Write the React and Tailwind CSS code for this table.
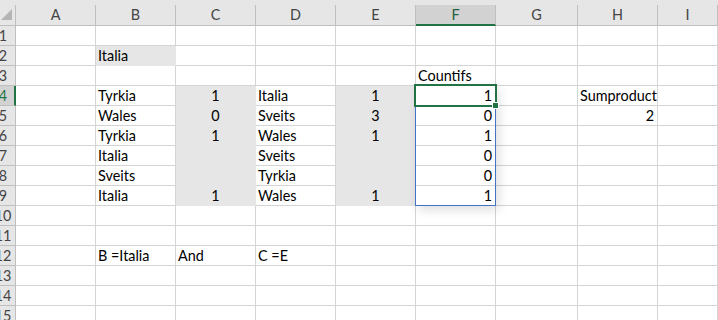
import React from 'react';

const cols = ['A', 'B', 'C', 'D', 'E', 'F', 'G', 'H', 'I'];

// value, align ('l' | 'c' | 'r'), filled
const data = {
  2: { B: ['Italia', 'l', true] },
  3: { F: ['Countifs', 'l'] },
  4: { B: ['Tyrkia', 'l'], C: ['1', 'c', true], D: ['Italia', 'l'], E: ['1', 'c', true], F: ['1', 'r'], H: ['Sumproduct', 'l'] },
  5: { B: ['Wales', 'l'], C: ['0', 'c', true], D: ['Sveits', 'l'], E: ['3', 'c', true], F: ['0', 'r'], H: ['2', 'r'] },
  6: { B: ['Tyrkia', 'l'], C: ['1', 'c', true], D: ['Wales', 'l'], E: ['1', 'c', true], F: ['1', 'r'] },
  7: { B: ['Italia', 'l'], C: ['', 'c', true], D: ['Sveits', 'l'], E: ['', 'c', true], F: ['0', 'r'] },
  8: { B: ['Sveits', 'l'], C: ['', 'c', true], D: ['Tyrkia', 'l'], E: ['', 'c', true], F: ['0', 'r'] },
  9: { B: ['Italia', 'l'], C: ['1', 'c', true], D: ['Wales', 'l'], E: ['1', 'c', true], F: ['1', 'r'] },
  12: { B: ['B =Italia', 'l'], C: ['And', 'l'], D: ['C =E', 'l'] },
};

const rows = Array.from({ length: 15 }, (_, i) => i + 1);

const Cell = ({ v }) => {
  if (!v) return <div className="h-[20px] border-r border-b border-[#d4d4d4]" />;
  const [text, align, filled] = v;
  const al = align === 'c' ? 'text-center' : align === 'r' ? 'text-right pr-[3px]' : 'text-left pl-[2px]';
  return (
    <div
      className={`h-[20px] border-r border-b leading-[19px] whitespace-nowrap overflow-visible ${al} ${
        filled ? 'bg-[#e7e6e6] border-[#e7e6e6]' : 'border-[#d4d4d4]'
      }`}
    >
      {text}
    </div>
  );
};

export default function App() {
  return (
    <div
      className="relative w-[718px] h-[320px] overflow-hidden bg-white text-black text-[14.4px]"
      style={{ fontFamily: 'Lato, "Liberation Sans", sans-serif' }}
    >
      <div className="h-[5px] bg-[#e6e6e6]" />
      <div className="grid grid-cols-[16px_80px_80px_80px_80px_80px_80px_82px_80px_1fr]">
        {/* header */}
        <div className="h-[21px] bg-[#e6e6e6] border-r border-b border-[#bfbfbf] flex items-end justify-start">
          <svg width="13" height="13" viewBox="0 0 13 13" className="mb-[4px]">
            <polygon points="1,12 12,12 12,1" fill="#b4b4b4" />
          </svg>
        </div>
        {cols.map((c) =>
          c === 'F' ? (
            <div
              key={c}
              className="h-[21px] bg-[#d2d2d2] border-r border-[#bfbfbf] border-b-2 border-b-[#217346] text-center leading-[19px] text-[#21603c]"
            >
              {c}
            </div>
          ) : (
            <div
              key={c}
              className="h-[21px] bg-[#e6e6e6] border-r border-b border-[#bfbfbf] text-center leading-[20px] text-[#444]"
            >
              {c}
            </div>
          )
        )}

        {rows.map((r) => (
          <React.Fragment key={r}>
            <div
              className={`h-[20px] overflow-hidden border-b border-[#bfbfbf] leading-[19px] ${
                r === 4
                  ? 'bg-[#d2d2d2] border-r-2 border-r-[#217346] text-[#217346]'
                  : 'bg-[#e6e6e6] border-r text-[#444]'
              }`}
            >
              <div className="w-[30px] -ml-[12px] text-center">{r}</div>
            </div>
            {cols.map((c) => (
              <Cell key={c} v={data[r] && data[r][c]} />
            ))}
          </React.Fragment>
        ))}
      </div>

      {/* range F4:F9 */}
      <div className="absolute left-[415px] top-[85px] w-[81px] h-[121px] border border-[#4472c4] shadow-[3px_4px_10px_rgba(0,0,0,0.13)] pointer-events-none" />
      {/* active cell F4 */}
      <div className="absolute left-[414px] top-[84px] w-[83px] h-[23px] border-2 border-[#217346] pointer-events-none" />
      <div className="absolute left-[492px] top-[102px] w-[7px] h-[7px] bg-[#217346] border border-white" />
    </div>
  );
}
